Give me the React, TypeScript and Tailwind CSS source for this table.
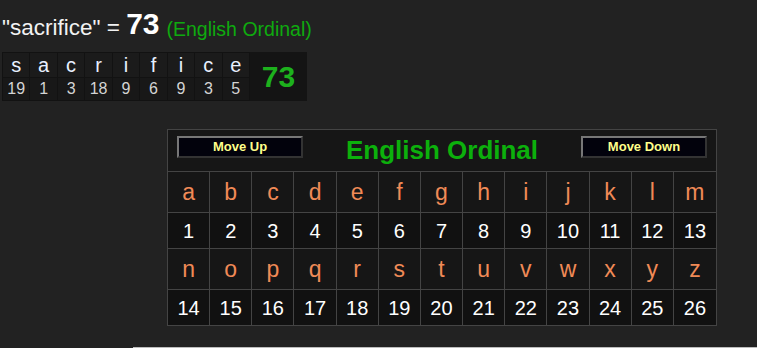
const WORD = [
  ['s', 19],
  ['a', 1],
  ['c', 3],
  ['r', 18],
  ['i', 9],
  ['f', 6],
  ['i', 9],
  ['c', 3],
  ['e', 5],
] as const

const LETTERS = 'abcdefghijklmnopqrstuvwxyz'.split('')

export default function App() {
  const rows = [LETTERS.slice(0, 13), LETTERS.slice(13)]

  return (
    <div className="min-h-[348px] bg-[#222222] font-['Liberation_Sans',Arial,sans-serif] text-white">
      {/* heading */}
      <div className="flex h-[52px] items-end pb-[13px] pl-[2px]">
        <span className="text-[22.5px] leading-none text-[#f2f2f2]">"sacrifice" =&nbsp;</span>
        <span className="text-[30px] font-bold leading-none">73</span>
        <span className="ml-[7px] text-[19.5px] leading-none text-[#0faa0f]">(English Ordinal)</span>
      </div>

      {/* word breakdown */}
      <div className="ml-[2px] flex w-fit bg-[#121212]">
        <div className="grid w-[248px] grid-cols-9 gap-px p-px">
          {WORD.map(([ch], i) => (
            <div key={'l' + i} className="flex h-[24px] items-center justify-center bg-[#1b1b1b] text-[20px] text-[#e8f0ff]">
              {ch}
            </div>
          ))}
          {WORD.map(([, n], i) => (
            <div key={'n' + i} className="flex h-[22px] items-center justify-center bg-[#181818] text-[16px] text-[#d4d4d4]">
              {n}
            </div>
          ))}
        </div>
        <div className="flex w-[57px] items-center justify-center bg-[#141414] text-[30px] font-bold text-[#1db11d]">
          73
        </div>
      </div>

      {/* cipher chart */}
      <div className="ml-[167px] mt-[28px] w-[550px] border border-[#444] bg-[#161616]">
        <div className="flex h-[42px] items-start justify-between border-b border-[#444] px-[9px] pt-[6px]">
          <CipherButton label="Move Up" />
          <span className="text-[26px] font-bold leading-[28px] text-[#0cb00c]">English Ordinal</span>
          <CipherButton label="Move Down" />
        </div>
        {rows.map((row, r) => (
          <div key={r}>
            <div className="grid grid-cols-13 border-b border-[#444]">
              {row.map((ch, i) => (
                <div key={ch} className={`flex h-[40px] items-center justify-center text-[23px] text-[#f08a56] ${i < 12 ? 'border-r border-[#444]' : ''}`}>
                  {ch}
                </div>
              ))}
            </div>
            <div className={`grid grid-cols-13 ${r === 0 ? 'border-b border-[#444]' : ''}`}>
              {row.map((ch, i) => (
                <div key={ch} className={`flex h-[35px] items-center justify-center bg-[#111] text-[20px] text-white ${i < 12 ? 'border-r border-[#444]' : ''}`}>
                  {LETTERS.indexOf(ch) + 1}
                </div>
              ))}
            </div>
          </div>
        ))}
      </div>

      <div className="ml-[133px] mt-[21px] h-px bg-[#bdbdbd]" />
    </div>
  )
}

function CipherButton({ label }: { label: string }) {
  return (
    <span className="flex h-[22px] w-[126px] items-center justify-center border-2 border-t-[#777] border-l-[#777] border-r-[#333] border-b-[#333] bg-[#02020c] text-[13px] font-bold text-[#ffff8a]">
      {label}
    </span>
  )
}
